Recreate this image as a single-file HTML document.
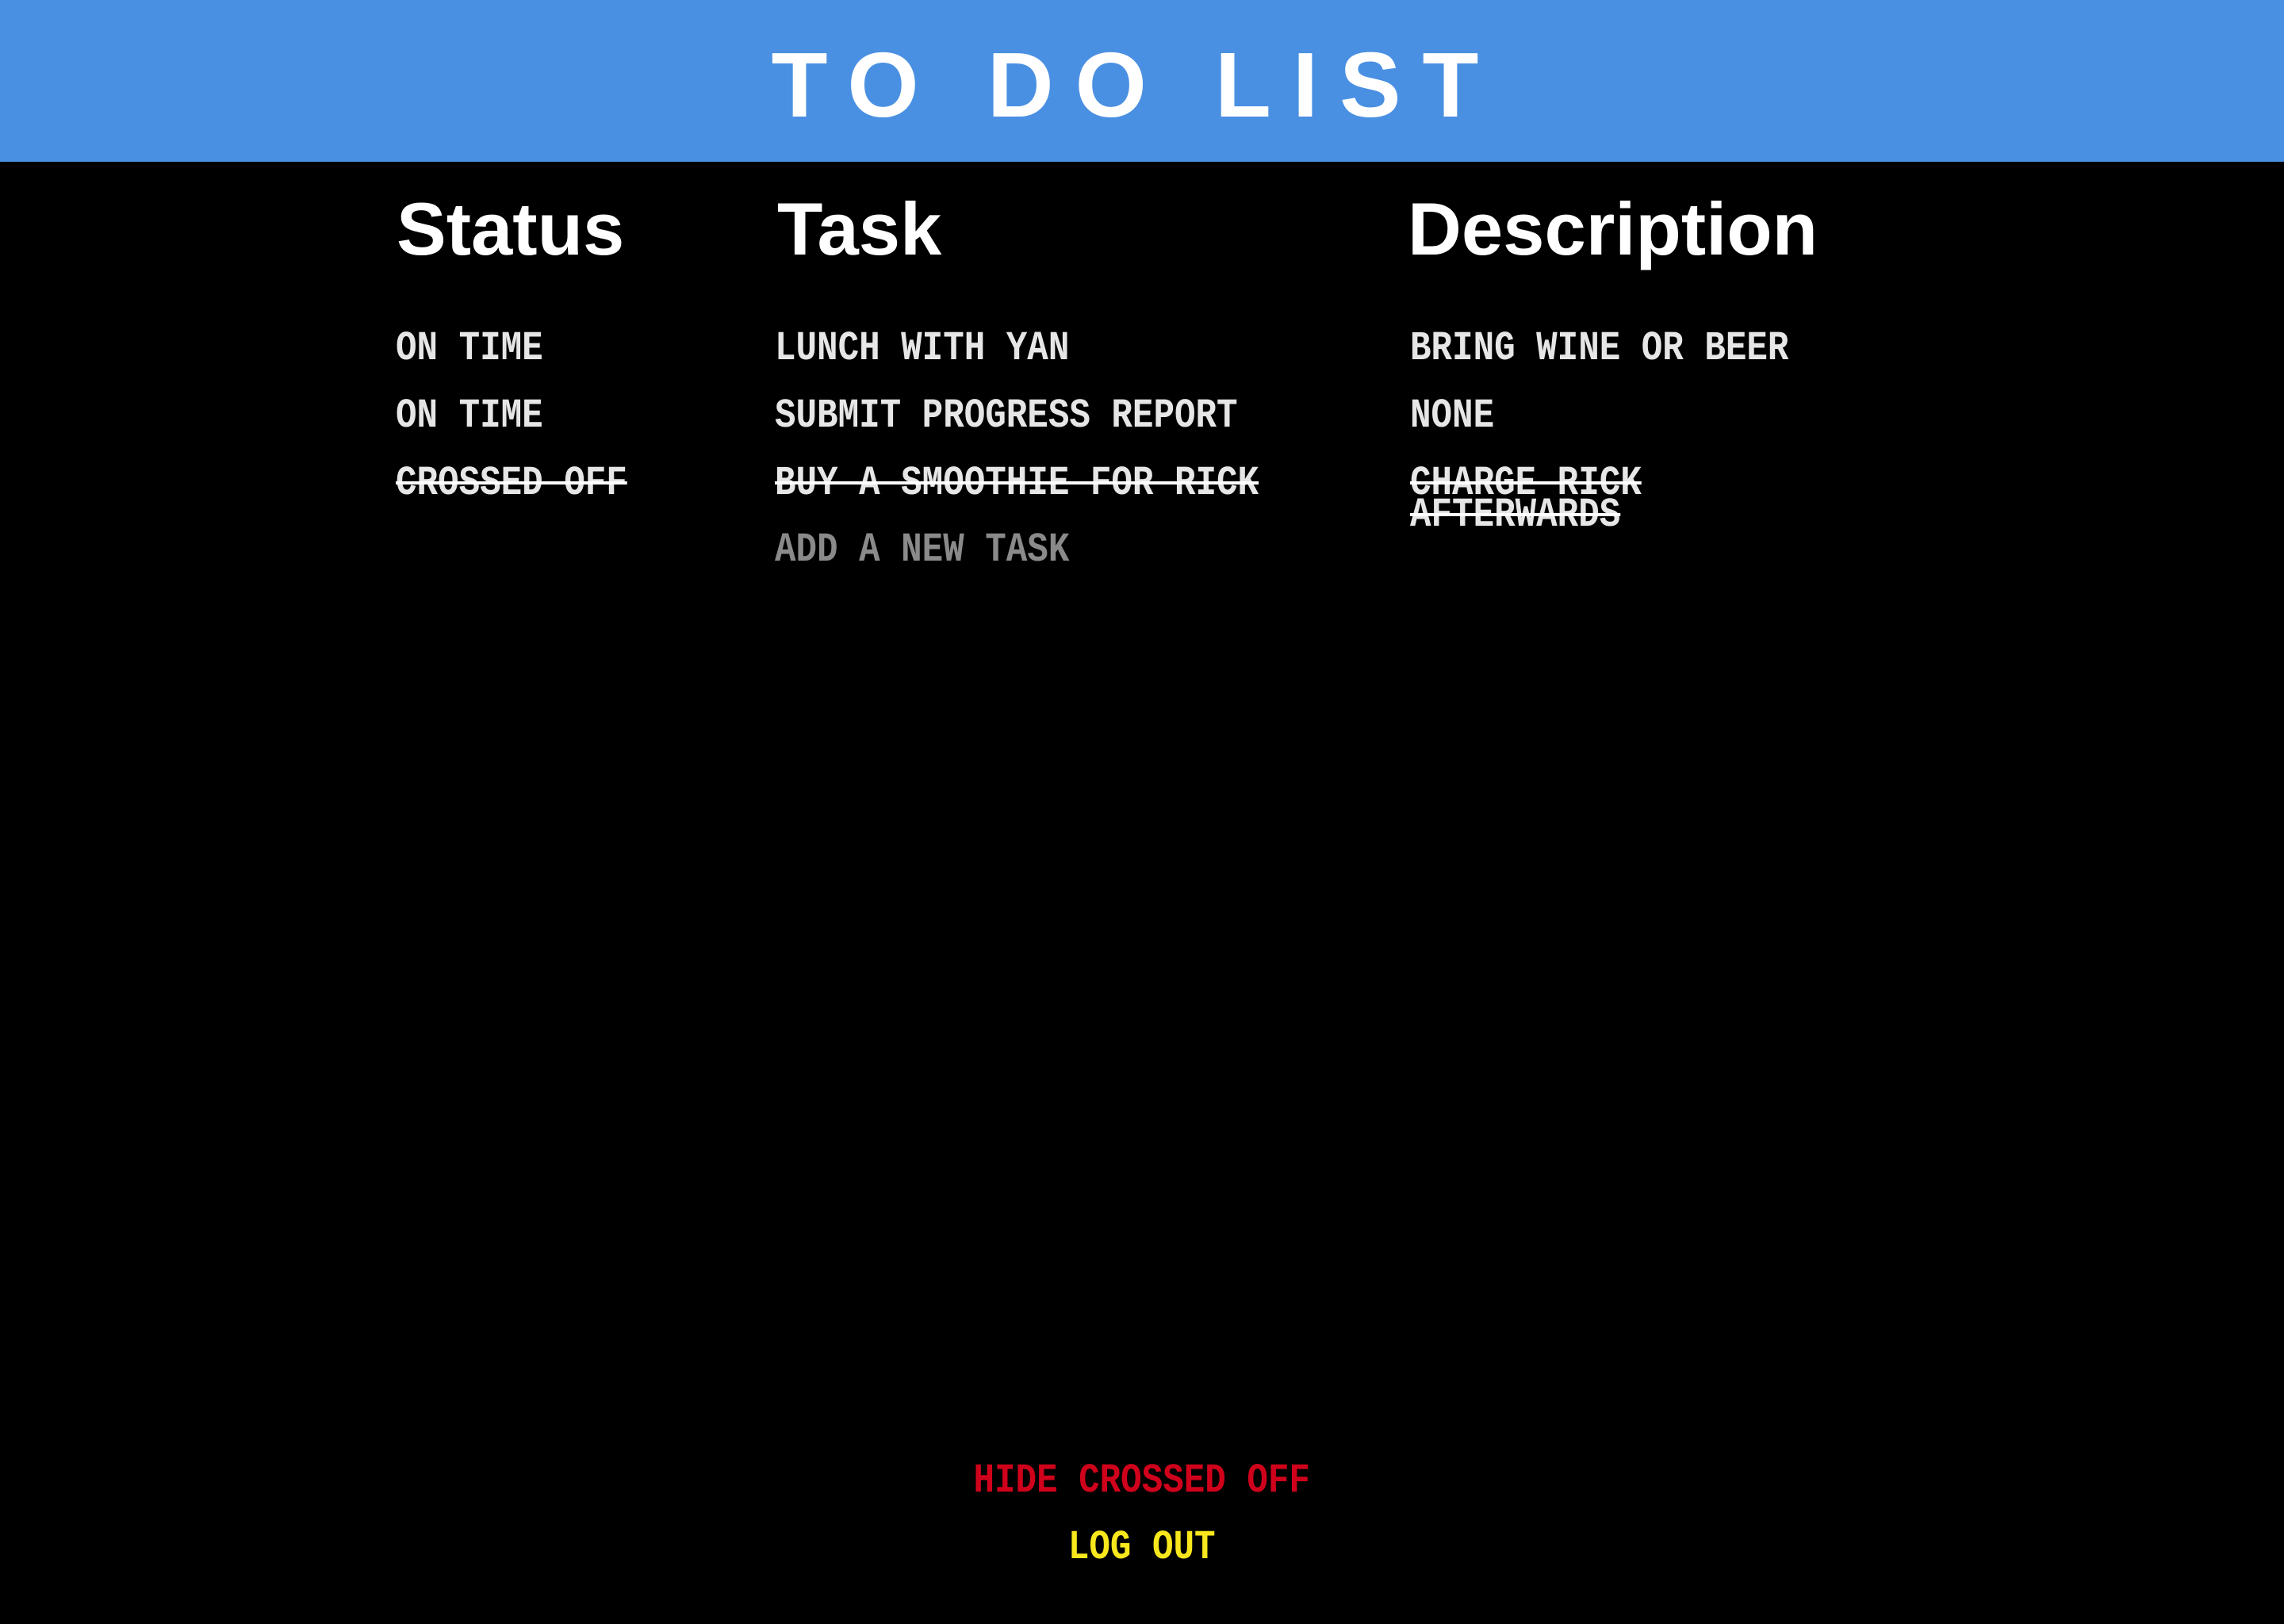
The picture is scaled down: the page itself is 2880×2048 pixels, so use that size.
<!DOCTYPE html>
<html><head><meta charset="utf-8"><style>
html,body{margin:0;padding:0;background:#000;width:2880px;height:2048px;overflow:hidden;position:relative}
.bar{position:absolute;left:0;top:0;width:2880px;height:204px;background:#4a90e2}
.title{position:absolute;left:-8px;width:2880px;top:49px;text-align:center;font:bold 116px/116px "Liberation Sans",sans-serif;color:#fff;letter-spacing:27px;padding-left:0;box-sizing:border-box}
.h{position:absolute;top:242px;font:bold 94px/94px "Liberation Sans",sans-serif;color:#fff}
.r{position:absolute;font:bold 52px/40px "Liberation Mono",monospace;color:#e6e6e6;transform:scaleX(0.85);transform-origin:0 0;white-space:nowrap}
.s{text-decoration:line-through;text-decoration-thickness:4px;text-decoration-color:#fff}
.c{position:absolute;left:0;width:2880px;text-align:center;font:bold 52px/40px "Liberation Mono",monospace;transform:scaleX(0.85);transform-origin:1438px 0;white-space:nowrap}
</style></head><body>
<div class="bar"></div>
<div class="title">TO DO LIST</div>
<div class="h" style="left:500px">Status</div>
<div class="h" style="left:980px">Task</div>
<div class="h" style="left:1775px">Description</div>

<div class="r" style="left:499px;top:420px">ON TIME</div>
<div class="r" style="left:977px;top:420px">LUNCH WITH YAN</div>
<div class="r" style="left:1778px;top:420px">BRING WINE OR BEER</div>

<div class="r" style="left:499px;top:505px">ON TIME</div>
<div class="r" style="left:977px;top:505px">SUBMIT PROGRESS REPORT</div>
<div class="r" style="left:1778px;top:505px">NONE</div>

<div class="r s" style="left:499px;top:590px">CROSSED OFF</div>
<div class="r s" style="left:977px;top:590px">BUY A SMOOTHIE FOR RICK</div>
<div class="r s" style="left:1778px;top:590px">CHARGE RICK<br>AFTERWARDS</div>

<div class="r" style="left:977px;top:674px;color:#8a8a8a">ADD A NEW TASK</div>

<div class="c" style="top:1848px;color:#d0021b">HIDE CROSSED OFF</div>
<div class="c" style="top:1932px;color:#f8e71c">LOG OUT</div>
</body></html>
